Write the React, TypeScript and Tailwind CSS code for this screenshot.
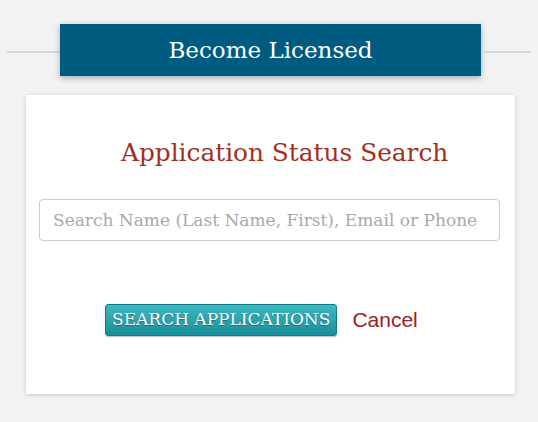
import React from "react";

export default function App() {
  const slab = { fontFamily: '"DejaVu Serif", "Liberation Serif", serif' };
  return (
    <div className="min-h-[422px] w-[538px] bg-[#f2f2f2] overflow-hidden">
      <div className="flex items-start px-[7px] pt-[24px]">
        <div className="w-[53px] h-[2px] mt-[27px] bg-[#d8d8d8]" />
        <div
          className="w-[421px] h-[52px] bg-[#005b80] flex items-center justify-center text-white text-[23px] pt-[1px] shadow-[0_2px_6px_rgba(0,0,0,0.3)]"
          style={slab}
        >
          Become Licensed
        </div>
        <div className="flex-1 h-[2px] mt-[27px] bg-[#d8d8d8]" />
      </div>
      <div className="ml-[26px] mt-[19px] w-[489px] h-[299px] bg-white shadow-[0_1px_4px_rgba(0,0,0,0.18)] flex flex-col">
        <h1
          className="pl-[95px] pt-[41px] text-[24.8px] leading-[34px] text-[#a3301f]"
          style={slab}
        >
          Application Status Search
        </h1>
        <div className="pl-[13px] pt-[29px]">
          <input
            className="w-[461px] h-[42px] border border-[#cccccc] rounded-[4px] px-[13px] text-[17px] placeholder:text-[#a9a9a9] outline-none"
            style={slab}
            placeholder="Search Name (Last Name, First), Email or Phone"
          />
        </div>
        <div className="flex items-center pl-[79px] pt-[63px]">
          <button
            className="h-[32px] px-[6px] rounded-[3px] border border-[#107a85] bg-gradient-to-b from-[#3cb9c4] to-[#17909b] text-white text-[17px] shadow-[0_1px_1px_rgba(0,0,0,0.25)]"
            style={{ ...slab, textShadow: "0 1px 1px rgba(0,0,0,0.35)" }}
          >
            SEARCH APPLICATIONS
          </button>
          <a
            className="ml-[15px] text-[21px] text-[#9b2026]"
            style={{ fontFamily: '"Liberation Sans", Arial, sans-serif' }}
          >
            Cancel
          </a>
        </div>
      </div>
    </div>
  );
}
